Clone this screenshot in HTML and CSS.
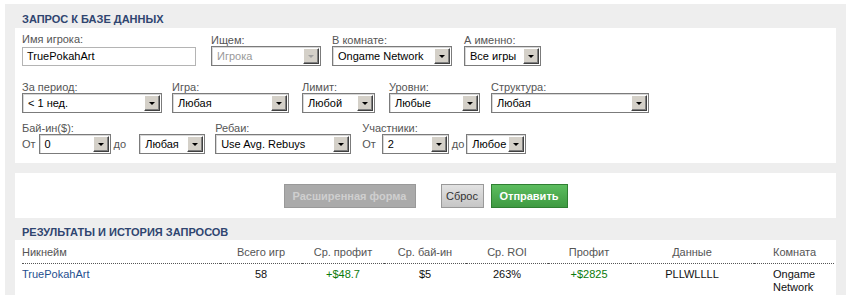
FILE: index.html
```html
<!DOCTYPE html>
<html lang="ru">
<head>
    <meta charset="UTF-8">
    <title>Запрос к базе данных</title>
    <link rel="stylesheet" href="styles.css">
</head>
<body>
    <div class="box">
        <h2 class="box-title first">ЗАПРОС К БАЗЕ ДАННЫХ</h2>

        <div class="panel form">
            <div class="row r1">
                <div class="field gap-15">
                    <label>Имя игрока:</label>
                    <div class="input w-174">TruePokahArt</div>
                </div>
                <div class="field gap-11">
                    <label>Ищем:</label>
                    <div class="sel disabled w-110"><span class="val">Игрока</span><span class="arr"></span></div>
                </div>
                <div class="field gap-12">
                    <label>В комнате:</label>
                    <div class="sel w-120"><span class="val">Ongame Network</span><span class="arr"></span></div>
                </div>
                <div class="field">
                    <label>А именно:</label>
                    <div class="sel w-77"><span class="val">Все игры</span><span class="arr"></span></div>
                </div>
            </div>

            <div class="row r2">
                <div class="field gap-10">
                    <label>За период:</label>
                    <div class="sel w-140"><span class="val">&lt; 1 нед.</span><span class="arr"></span></div>
                </div>
                <div class="field gap-13">
                    <label>Игра:</label>
                    <div class="sel w-117"><span class="val">Любая</span><span class="arr"></span></div>
                </div>
                <div class="field gap-14">
                    <label>Лимит:</label>
                    <div class="sel w-73"><span class="val">Любой</span><span class="arr"></span></div>
                </div>
                <div class="field gap-11">
                    <label>Уровни:</label>
                    <div class="sel w-91"><span class="val">Любые</span><span class="arr"></span></div>
                </div>
                <div class="field">
                    <label>Структура:</label>
                    <div class="sel w-158"><span class="val">Любая</span><span class="arr"></span></div>
                </div>
            </div>

            <div class="row r3">
                <div class="field gap-10">
                    <label>Бай-ин($):</label>
                    <div class="range buyin">
                        <span class="word from">От</span>
                        <div class="sel w-72"><span class="val">0</span><span class="arr"></span></div>
                        <span class="word to">до</span>
                        <div class="sel w-66"><span class="val">Любая</span><span class="arr"></span></div>
                    </div>
                </div>
                <div class="field gap-11">
                    <label>Ребаи:</label>
                    <div class="sel w-136"><span class="val">Use Avg. Rebuys</span><span class="arr"></span></div>
                </div>
                <div class="field">
                    <label>Участники:</label>
                    <div class="range players">
                        <span class="word from">От</span>
                        <div class="sel w-67"><span class="val">2</span><span class="arr"></span></div>
                        <span class="word to">до</span>
                        <div class="sel w-60"><span class="val">Любое</span><span class="arr"></span></div>
                    </div>
                </div>
            </div>
        </div>

        <div class="panel actions">
            <button class="btn btn-adv">Расширенная форма</button>
            <button class="btn btn-reset">Сброс</button>
            <button class="btn btn-send">Отправить</button>
        </div>

        <h2 class="box-title second">РЕЗУЛЬТАТЫ И ИСТОРИЯ ЗАПРОСОВ</h2>

        <div class="panel results">
            <table class="grid">
                <colgroup>
                    <col style="width:198px">
                    <col style="width:82px">
                    <col style="width:82px">
                    <col style="width:82px">
                    <col style="width:82px">
                    <col style="width:82px">
                    <col style="width:124px">
                    <col style="width:80px">
                </colgroup>
                <thead>
                    <tr>
                        <th class="left">Никнейм</th>
                        <th>Всего игр</th>
                        <th>Ср. профит</th>
                        <th>Ср. бай-ин</th>
                        <th>Ср. ROI</th>
                        <th>Профит</th>
                        <th>Данные</th>
                        <th class="room">Комната</th>
                    </tr>
                </thead>
                <tbody>
                    <tr>
                        <td class="left"><a href="#">TruePokahArt</a></td>
                        <td>58</td>
                        <td class="plus">+$48.7</td>
                        <td>$5</td>
                        <td>263%</td>
                        <td class="plus">+$2825</td>
                        <td>PLLWLLLL</td>
                        <td class="room">Ongame Network</td>
                    </tr>
                </tbody>
            </table>
        </div>
    </div>
</body>
</html>
```

FILE: styles.css
```css
body {
    margin: 0;
    background: #fff;
    font-family: "Liberation Sans", Arial, sans-serif;
    font-size: 11px;
    color: #000;
}
.box {
    width: 841px;
    margin: 4px 0 0 5px;
    padding: 0 10px;
    box-sizing: border-box;
    background: #eee;
}
.box-title {
    margin: 0;
    padding-left: 7px;
    font-size: 11px;
    font-weight: bold;
    line-height: 13px;
    color: #2f4570;
}
.box-title.first { padding-top: 9px; padding-bottom: 2px; }
.box-title.second { padding-top: 8px; padding-bottom: 1px; }
.panel {
    background: #fff;
}

/* форма */
.form {
    padding: 5px 7px 9px;
}
.row {
    display: flex;
    align-items: flex-end;
}
.r1 { margin-bottom: 15px; }
.r2 { margin-bottom: 9px; }
.field {
    display: flex;
    flex-direction: column;
}
.field label {
    line-height: 12px;
    color: #555;
}
.gap-10 { margin-right: 10px; }
.gap-11 { margin-right: 11px; }
.gap-12 { margin-right: 12px; }
.gap-13 { margin-right: 13px; }
.gap-14 { margin-right: 14px; }
.gap-15 { margin-right: 15px; }

.input {
    height: 19px;
    margin-top: 2px;
    box-sizing: border-box;
    border: 1px solid #b4b4b4;
    padding-left: 4px;
    line-height: 17px;
    color: #000;
}
.sel {
    display: flex;
    height: 20px;
    box-sizing: border-box;
    border: 1px solid #7b7b7b;
    box-shadow: inset 1px 1px 0 #d8d8d8;
    background: #fff;
}
.sel .val {
    flex: 1;
    padding-left: 5px;
    line-height: 18px;
    white-space: nowrap;
    overflow: hidden;
}
.sel .arr {
    position: relative;
    width: 16px;
    height: 16px;
    margin: 1px;
    box-sizing: border-box;
    background: #d4d0c8;
    border: 1px solid;
    border-color: #fff #404040 #404040 #fff;
    box-shadow: inset -1px -1px 0 #808080;
}
.sel .arr::after {
    content: "";
    position: absolute;
    left: 4px;
    top: 6px;
    border-style: solid;
    border-width: 3px 3px 0;
    border-color: #000 transparent transparent;
}
.sel.disabled .val { color: #999; }
.sel.disabled .arr::after { border-top-color: #a0a0a0; }

.w-60 { width: 60px; }
.w-66 { width: 66px; }
.w-67 { width: 67px; }
.w-72 { width: 72px; }
.w-73 { width: 73px; }
.w-77 { width: 77px; }
.w-91 { width: 91px; }
.w-110 { width: 110px; }
.w-117 { width: 117px; }
.w-120 { width: 120px; }
.w-136 { width: 136px; }
.w-140 { width: 140px; }
.w-158 { width: 158px; }
.w-174 { width: 174px; }

.range {
    display: flex;
    align-items: center;
}
.range .word {
    color: #555;
}
.buyin .from { margin-right: 3px; }
.buyin .to { margin: 0 13px 0 3px; }
.players .from { margin-right: 6px; }
.players .to { margin: 0 2px 0 3px; }

/* кнопки */
.actions {
    margin-top: 10px;
    padding: 11px 0 10px;
    display: flex;
    justify-content: center;
}
.btn {
    height: 24px;
    box-sizing: border-box;
    margin: 0;
    padding: 0;
    font-family: "Liberation Sans", Arial, sans-serif;
    font-size: 11px;
    border: 1px solid #999;
    cursor: pointer;
}
.btn-adv {
    width: 132px;
    margin-right: 25px;
    background: #aaa;
    color: #cfcfcf;
    font-weight: bold;
}
.btn-reset {
    width: 43px;
    margin-right: 7px;
    background: linear-gradient(#e2e2e2, #c6c6c6);
    color: #333;
}
.btn-send {
    width: 77px;
    background: linear-gradient(#5cbd5f, #3f9a42);
    border-color: #2f7f32;
    color: #fff;
    font-weight: bold;
}

/* результаты */
.results {
    padding: 0 2px 1px 7px;
}
.grid {
    width: 812px;
    table-layout: fixed;
    border-collapse: collapse;
}
.grid th {
    padding: 5px 0 4px;
    line-height: 14px;
    font-weight: normal;
    color: #555;
    text-align: center;
    border-bottom: 1px dotted #555;
}
.grid td {
    padding: 4px 0 0;
    line-height: 13px;
    text-align: center;
    vertical-align: top;
    color: #111;
}
.grid .left { text-align: left; }
.grid .room { text-align: left; padding-left: 19px; }
.grid a {
    color: #1f4f8f;
    text-decoration: none;
}
.grid .plus { color: #0a7a0a; }
```
